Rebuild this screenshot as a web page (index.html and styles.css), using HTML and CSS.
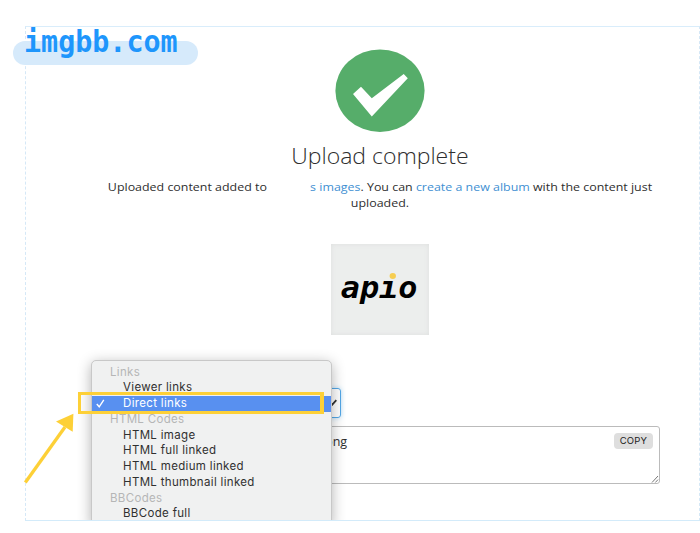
FILE: index.html
```html
<!DOCTYPE html>
<html lang="en">
<head>
<meta charset="utf-8">
<title>imgbb.com</title>
<link rel="stylesheet" href="styles.css">
</head>
<body>
<main class="frame">
  <section class="panel">
    <svg class="done" width="90" height="84" viewBox="335 49 90 84">
      <ellipse cx="380" cy="90.7" rx="44.6" ry="41.3" fill="#56ad6a"/>
      <path d="M353 94L361 86.7L371.8 98.3L403.7 74L407.8 78.3L371.8 116.5Z" fill="#fff"/>
    </svg>
    <h1 class="title">Upload complete</h1>
    <p class="summary"><span class="line"><span>Uploaded content added to</span><span class="gap"></span><a>s images</a>. You can <a>create a new album</a> with the content just</span><span class="line">uploaded.</span></p>
    <div class="thumb"><span class="logo">ap<span class="stem">ı<i class="dot"></i></span>o</span></div>
    <div class="select"><svg width="10" height="8" viewBox="0 0 10 8"><path d="M1 2L4.3 5.6L8.3 1.2" fill="none" stroke="#333" stroke-width="1.8"/></svg></div>
    <div class="codes"><span class="url">png</span><button class="copy">COPY</button>
      <svg class="grip" width="8" height="8" viewBox="0 0 8 8"><path d="M1 7.5L7 1M4.3 7.5L7 4.6" stroke="#777" fill="none"/></svg>
    </div>
  </section>
  <div class="menu">
    <div class="group">Links</div>
    <div class="item">Viewer links</div>
    <div class="item selected"><svg class="tick" width="9" height="9" viewBox="0 0 9 9"><path d="M.8 5L3.2 7.8L7.8 .9" fill="none" stroke="#fff" stroke-width="1.4"/></svg>Direct links</div>
    <div class="group">HTML Codes</div>
    <div class="item">HTML image</div>
    <div class="item">HTML full linked</div>
    <div class="item">HTML medium linked</div>
    <div class="item">HTML thumbnail linked</div>
    <div class="group">BBCodes</div>
    <div class="item">BBCode full</div>
  </div>
</main>
<div class="site"><span class="name">imgbb.com</span></div>
<div class="callout"></div>
<svg class="arrow" width="54" height="74" viewBox="22 411 54 74">
  <path d="M25.3 482.5L65 427" stroke="#fdd037" stroke-width="3.3" fill="none"/>
  <path d="M73.4 413.8L56 421.6L72.7 431.8Z" fill="#fdd037"/>
</svg>
</body>
</html>
```

FILE: styles.css
```css
* { box-sizing: border-box; }
body { margin: 0; height: 533px; position: relative; overflow: hidden; background: #fff; padding: 26px 0 0 25px; font-family: "Open Sans", sans-serif; color: #2e2e2e; }
.frame { position: relative; width: 675px; height: 495px; overflow: hidden; border: 1px dashed #d5e8f7; border-top: 1px solid #d9edfb; border-bottom: 1px solid #d3ebfa; }
.panel { display: flex; flex-direction: column; align-items: center; width: 560px; margin-left: 74px; padding-top: 22px; }
.done { display: block; }
.title { margin: 6px 0 0; height: 32px; line-height: 33px; font-size: 21.5px; font-weight: 300; white-space: nowrap; transform: scaleX(1.07); }
.summary { margin: 8px 0 0; font-size: 11.5px; line-height: 16.4px; transform: scaleX(1.08); }
.line { display: block; text-align: center; white-space: nowrap; }
.summary a { color: #3e8fd2; }
.gap { display: inline-block; width: 40px; }
.thumb { display: flex; align-items: center; justify-content: center; width: 98px; height: 91px; margin-top: 32px; background: #eceeed; box-shadow: inset 0 0 5px #dedfdf; }
.logo { font: italic bold 30px/30px "DejaVu Sans Mono", monospace; color: #000; transform: translate(-1px, -1px) scaleX(1.06); }
.stem { position: relative; }
.dot { position: absolute; left: 10px; top: 3px; width: 6px; height: 6px; border-radius: 50%; background: #f6cd51; }
.select { align-self: flex-start; display: flex; align-items: center; justify-content: flex-end; width: 241px; height: 30px; margin-top: 53px; padding-right: 2px; border: 1px solid #53a8e8; border-radius: 3px; box-shadow: 0 0 5px #b6dcf6; }
.codes { position: relative; display: flex; justify-content: space-between; width: 560px; height: 58px; margin-top: 8px; padding: 6px 6px 0 224px; border: 1px solid #bbb; border-radius: 3px; }
.url { font-size: 12.5px; line-height: 17px; }
.copy { width: 39px; height: 16px; padding: 0; border: 0; border-radius: 4px; background: #dedede; color: #222; font: 9.5px/16px Inter, sans-serif; letter-spacing: .2px; }
.grip { position: absolute; right: 0; bottom: 0; }
.menu { position: absolute; left: 65px; top: 333px; width: 241px; height: 165px; padding-top: 3.7px; background: #f0f1f1; border: 1px solid #c8c8c8; border-radius: 5px 5px 0 0; box-shadow: 0 3px 14px rgba(0,0,0,.3); font: 11.5px/15.75px Inter, sans-serif; letter-spacing: .33px; white-space: nowrap; }
.group { height: 15.75px; padding-left: 18px; color: #b5b6b6; }
.item { position: relative; height: 15.75px; padding-left: 31px; color: #303030; }
.selected { background: #5890f0; color: #fff; }
.tick { position: absolute; left: 4px; top: 3px; }
.site { position: absolute; left: 13px; top: 41px; width: 185px; height: 24px; border-radius: 12px; background: #d6eafb; }
.name { position: absolute; left: 11px; bottom: 4px; font: bold 30px/38px "DejaVu Sans Mono", monospace; color: #1e96fc; transform-origin: 0 50%; transform: scaleX(.945); }
.callout { position: absolute; left: 78px; top: 392px; width: 246px; height: 22px; border: 3px solid #fdd037; border-width: 3px 4px 3px 3px; }
.arrow { position: absolute; left: 22px; top: 411px; }
```
